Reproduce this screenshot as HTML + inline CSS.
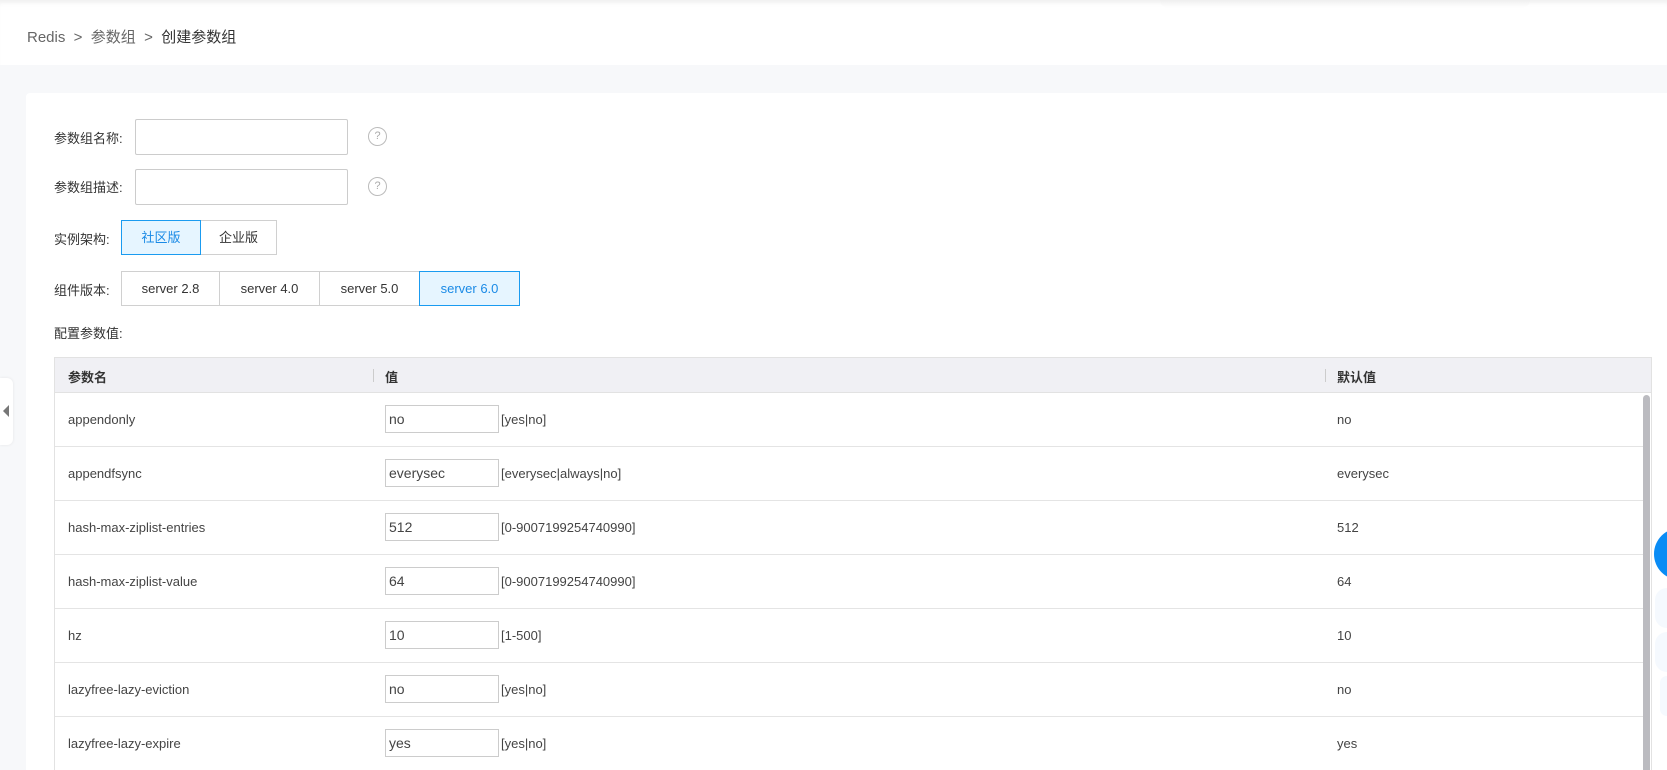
<!DOCTYPE html>
<html style="width:1667px;height:770px;overflow:hidden"><head><meta charset="utf-8"><style>
*{box-sizing:border-box;margin:0;padding:0}
body{width:1667px;height:770px;overflow:hidden;background:#f7f8fa;font-family:"Liberation Sans","Noto Sans CJK SC",sans-serif;color:#333;position:relative}
.top{position:absolute;left:0;top:0;width:1667px;height:65px;background:#fff;box-shadow:inset 0 6px 6px -4px rgba(0,0,0,.08)}
.bc{position:absolute;left:27px;top:26px;font-size:15px;color:#666}
.bc b{font-weight:normal;color:#333}
.card{position:absolute;left:26px;top:93px;width:1641px;height:677px;background:#fff;border-radius:4px 0 0 0}
.abs{position:absolute}
.lbl{font-size:13px;color:#333}
.inp{position:absolute;border:1px solid #ccc;border-radius:2px;background:#fff}
.help{position:absolute;width:19px;height:19px;border:1.5px solid #bbb;border-radius:50%;color:#aaa;font-size:11px;text-align:center;line-height:16px}
.btn{position:absolute;border:1px solid #d0d0d0;background:#fff;font-size:13px;color:#333;text-align:center;line-height:33px;height:35px}
.btn.on{border-color:#1a9bf0;background:#e6f5ff;color:#1a8ae6;z-index:2}
.tbl{position:absolute;left:54px;top:357px;width:1598px;height:413px;border:1px solid #e2e2e2;border-bottom:none;background:#fff;overflow:hidden}
.th{position:absolute;left:0;top:0;width:100%;height:35px;background:#f0f0f4;border-bottom:1px solid #e2e2e2;font-size:13px;font-weight:bold;color:#333}
.th span{position:absolute;top:9px}
.sep{position:absolute;top:11px;width:1px;height:13px;background:#ccc}
.row{position:absolute;left:0;width:1588px;height:54px;border-bottom:1px solid #e4e4e4;font-size:13px;color:#444}
.row span{position:absolute;top:19px}
.row .vi{position:absolute;left:330px;top:12px;width:114px;height:28px;border:1px solid #ccc;padding-left:3px;line-height:26px;font-size:14px}
.sb{position:absolute;left:1588px;top:37px;width:7px;height:400px;background:#bbbbc0;border-radius:4px}
</style></head><body>
<div class="top"></div>
<div class="bc">Redis &nbsp;&gt;&nbsp; 参数组 &nbsp;&gt;&nbsp; <b>创建参数组</b></div>
<div class="abs" style="left:1160px;top:0;width:370px;height:8px;background:linear-gradient(#eee,#fff);border-radius:0 0 20px 20px;opacity:.6"></div>
<div class="card"></div>
<div class="abs lbl" style="left:54px;top:128px">参数组名称:</div>
<div class="inp" style="left:135px;top:119px;width:213px;height:36px"></div>
<div class="help" style="left:368px;top:127px">?</div>
<div class="abs lbl" style="left:54px;top:177px">参数组描述:</div>
<div class="inp" style="left:135px;top:169px;width:213px;height:36px"></div>
<div class="help" style="left:368px;top:177px">?</div>
<div class="abs lbl" style="left:54px;top:229px">实例架构:</div>
<div class="btn on" style="left:121px;top:220px;width:80px">社区版</div>
<div class="btn" style="left:200px;top:220px;width:77px">企业版</div>
<div class="abs lbl" style="left:54px;top:280px">组件版本:</div>
<div class="btn" style="left:121px;top:271px;width:99px">server 2.8</div>
<div class="btn" style="left:219px;top:271px;width:101px">server 4.0</div>
<div class="btn" style="left:319px;top:271px;width:101px">server 5.0</div>
<div class="btn on" style="left:419px;top:271px;width:101px">server 6.0</div>
<div class="abs lbl" style="left:54px;top:323px">配置参数值:</div>
<div class="tbl">
<div class="th"><span style="left:13px">参数名</span><div class="sep" style="left:318px"></div><span style="left:330px">值</span><div class="sep" style="left:1270px"></div><span style="left:1282px">默认值</span></div>
<div class="row" style="top:35px"><span style="left:13px">appendonly</span><div class="vi">no</div><span style="left:446px">[yes|no]</span><span style="left:1282px">no</span></div>
<div class="row" style="top:89px"><span style="left:13px">appendfsync</span><div class="vi">everysec</div><span style="left:446px">[everysec|always|no]</span><span style="left:1282px">everysec</span></div>
<div class="row" style="top:143px"><span style="left:13px">hash-max-ziplist-entries</span><div class="vi">512</div><span style="left:446px">[0-9007199254740990]</span><span style="left:1282px">512</span></div>
<div class="row" style="top:197px"><span style="left:13px">hash-max-ziplist-value</span><div class="vi">64</div><span style="left:446px">[0-9007199254740990]</span><span style="left:1282px">64</span></div>
<div class="row" style="top:251px"><span style="left:13px">hz</span><div class="vi">10</div><span style="left:446px">[1-500]</span><span style="left:1282px">10</span></div>
<div class="row" style="top:305px"><span style="left:13px">lazyfree-lazy-eviction</span><div class="vi">no</div><span style="left:446px">[yes|no]</span><span style="left:1282px">no</span></div>
<div class="row" style="top:359px"><span style="left:13px">lazyfree-lazy-expire</span><div class="vi">yes</div><span style="left:446px">[yes|no]</span><span style="left:1282px">yes</span></div>
<div class="sb"></div>
</div>
<div class="abs" style="left:0;top:378px;width:13px;height:67px;background:#fff;border-radius:0 6px 6px 0;box-shadow:0 0 3px rgba(0,0,0,.08)"></div>
<div class="abs" style="left:3px;top:405px;width:0;height:0;border-top:6px solid transparent;border-bottom:6px solid transparent;border-right:6px solid #777"></div>
<div class="abs" style="left:1654px;top:528px;width:26px;height:52px;border-radius:26px 0 0 26px;background:#0a8cf5"></div>
<div class="abs" style="left:1655px;top:588px;width:12px;height:40px;border-radius:20px 0 0 20px;background:#f5f9fe"></div>
<div class="abs" style="left:1655px;top:632px;width:12px;height:40px;border-radius:20px 0 0 20px;background:#f5f9fe"></div>
<div class="abs" style="left:1660px;top:676px;width:7px;height:40px;border-radius:20px 0 0 20px;background:#f5f9fe"></div>
</body></html>
